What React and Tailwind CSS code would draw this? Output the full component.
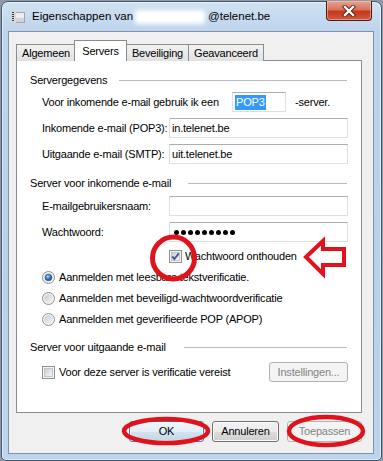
import React from "react";

function Checkbox({ checked }) {
  return (
    <svg width="13" height="13" viewBox="0 0 13 13" className="shrink-0">
      <defs>
        <linearGradient id="cbg" x1="0" y1="0" x2="1" y2="1">
          <stop offset="0" stopColor="#c9cdd3" />
          <stop offset="1" stopColor="#f7f7f7" />
        </linearGradient>
      </defs>
      <rect x="0.5" y="0.5" width="12" height="12" fill="#f5f5f5" stroke="#8e8f8f" />
      <rect x="2.5" y="2.5" width="8" height="8" fill="url(#cbg)" stroke="#b7bcc4" strokeWidth="0.8" />
      {checked && (
        <path d="M3.2 6.3 L5.4 9 L9.8 3.4" fill="none" stroke="#46598e" strokeWidth="1.9" />
      )}
    </svg>
  );
}

function Radio({ checked }) {
  return (
    <svg width="13" height="13" viewBox="0 0 13 13" className="shrink-0">
      <defs>
        <linearGradient id="rbg" x1="0" y1="0" x2="1" y2="1">
          <stop offset="0" stopColor="#c6cad0" />
          <stop offset="1" stopColor="#f4f4f4" />
        </linearGradient>
        <radialGradient id="rsel" cx="0.4" cy="0.35" r="0.7">
          <stop offset="0" stopColor="#b7e3f8" />
          <stop offset="0.45" stopColor="#3f86c4" />
          <stop offset="1" stopColor="#163e72" />
        </radialGradient>
      </defs>
      <circle cx="6.5" cy="6.5" r="6" fill="#f3f3f3" stroke="#8e8f8f" />
      <circle cx="6.5" cy="6.5" r="4.3" fill="url(#rbg)" />
      {checked && <circle cx="6.5" cy="6.5" r="3.3" fill="url(#rsel)" stroke="#24497c" strokeWidth="0.6" />}
    </svg>
  );
}

function Input({ w = "w-[179px]", children }) {
  return (
    <div
      className={`${w} h-[20px] bg-white border border-[#dbdfe6] border-t-[#abadb3] flex items-center pl-[2px] shrink-0`}
    >
      {children}
    </div>
  );
}

function GroupHeader({ label, gap }) {
  return (
    <div className="h-[15px] flex items-center pl-[13px] pr-[14px]">
      <span className="whitespace-nowrap">{label}</span>
      <div className={`flex-1 h-px bg-[#b6bbc1] ${gap}`} />
    </div>
  );
}

const btnNormal =
  "border border-[#707070] rounded-[3px] bg-[linear-gradient(to_bottom,#f2f2f2_0%,#ebebeb_50%,#dddddd_50%,#cfcfcf_100%)] shadow-[inset_0_0_0_1px_#fbfbfb]";
const btnDefault =
  "border border-[#3c7fb1] rounded-[3px] bg-[linear-gradient(to_bottom,#f1f7fc_0%,#e4eef6_50%,#d3e3f0_50%,#c3d7e8_100%)] shadow-[inset_0_0_0_1px_#f8fbfe]";
const btnDisabled = "border border-[#adb2b5] rounded-[3px] bg-[#f4f4f4] text-[#838383]";

export default function App() {
  return (
    <div className="w-[383px] h-[461px] bg-[#8e9aa8] p-[1px] font-['Liberation_Sans',Arial,sans-serif] text-[11px] tracking-[-0.2px] text-black relative overflow-hidden">
      <div className="h-[460px] rounded-t-[7px] rounded-b-[5px] border border-[#44566d] bg-[linear-gradient(to_bottom,#d0e1f2_0%,#bed4ec_30px,#b9d0e9_60%,#bdd4ec_100%)] shadow-[inset_0_0_0_1px_rgba(255,255,255,0.55)] flex flex-col pl-[6px] pr-[7px] pb-[6px]">
        {/* Title bar */}
        <div className="h-[29px] flex items-center relative">
          <svg width="16" height="16" viewBox="0 0 16 16" className="ml-[2px] shrink-0">
            <rect x="4.5" y="3.5" width="10" height="10" fill="#eeeeee" stroke="#a5a5a5" />
            <rect x="5" y="9" width="9" height="4" fill="#d4d4d4" />
            <rect x="2" y="2" width="4" height="12" fill="#d8d8d8" />
            <rect x="2" y="3" width="2" height="1" fill="#3a3a3a" />
            <rect x="2" y="5" width="2" height="1" fill="#3a3a3a" />
            <rect x="2" y="7" width="2" height="1" fill="#3a3a3a" />
            <rect x="2" y="9" width="2" height="1" fill="#3a3a3a" />
            <rect x="2" y="11" width="2" height="1" fill="#3a3a3a" />
          </svg>
          <span className="ml-[6px] text-[11.5px] tracking-normal whitespace-nowrap">Eigenschappen van</span>
          <div className="w-[70px] h-[14px] ml-[2px] bg-white rounded-[3px] blur-[2px]" />
          <span className="ml-[3px] text-[11.5px] tracking-normal whitespace-nowrap">@telenet.be</span>
          <div className="ml-auto mr-[2px] self-start -mt-[1px] w-[46px] h-[20px] rounded-b-[4px] border border-[#4a1c14] border-t-0 bg-[linear-gradient(to_bottom,#e7a190_0%,#d9735d_45%,#c4391d_55%,#d05a3e_100%)] shadow-[inset_0_0_0_1px_rgba(255,210,200,0.5)] flex items-center justify-center">
            <svg width="14" height="12" viewBox="0 0 14 12">
              <path d="M3 2 L11 10 M11 2 L3 10" stroke="#5a1a10" strokeWidth="4.2" strokeLinecap="square" />
              <path d="M3 2 L11 10 M11 2 L3 10" stroke="#ffffff" strokeWidth="2.4" strokeLinecap="square" />
            </svg>
          </div>
        </div>

        {/* Client area */}
        <div className="flex-1 bg-[#f0f0f0] border border-[#8093ab] pt-[8px] pl-[7px] pr-[10px] flex flex-col">
          {/* Tabs */}
          <div className="h-[21px] flex items-end relative z-10 -mb-px">
            <div className="w-[60px] h-[17px] border border-b-0 border-[#898c95] bg-[linear-gradient(to_bottom,#f2f2f2,#e1e1e1)] flex items-center justify-center">
              Algemeen
            </div>
            <div className="w-[53px] h-[21px] -ml-[2px] border border-b-0 border-[#898c95] bg-white flex items-start pt-[2px] justify-center relative z-10">
              Servers
            </div>
            <div className="w-[63px] h-[17px] -ml-[1px] border border-b-0 border-[#898c95] bg-[linear-gradient(to_bottom,#f2f2f2,#e1e1e1)] flex items-center justify-center">
              Beveiliging
            </div>
            <div className="w-[76px] h-[17px] -ml-[1px] border border-b-0 border-[#898c95] bg-[linear-gradient(to_bottom,#f2f2f2,#e1e1e1)] flex items-center justify-center">
              Geavanceerd
            </div>
          </div>

          {/* Panel */}
          <div className="w-[346px] h-[353px] bg-white border border-[#898c95] pt-[12px] flex flex-col">
            <GroupHeader label="Servergegevens" gap="ml-[12px]" />

            <div className="mt-[4px] h-[20px] flex items-center pl-[25px]">
              <span className="w-[190px] whitespace-nowrap">Voor inkomende e-mail gebruik ik een</span>
              <Input w="w-[54px]">
                <span className="bg-[#3399ff] text-white px-[1px] leading-[15px]">POP3</span>
              </Input>
              <span className="ml-[9px]">-server.</span>
            </div>

            <div className="mt-[6px] h-[20px] flex items-center pl-[25px]">
              <span className="w-[127px] whitespace-nowrap">Inkomende e-mail (POP3):</span>
              <Input>in.telenet.be</Input>
            </div>

            <div className="mt-[6px] h-[20px] flex items-center pl-[25px]">
              <span className="w-[127px] whitespace-nowrap">Uitgaande e-mail (SMTP):</span>
              <Input>uit.telenet.be</Input>
            </div>

            <div className="mt-[12px]">
              <GroupHeader label="Server voor inkomende e-mail" gap="ml-[17px]" />
            </div>

            <div className="mt-[5px] h-[20px] flex items-center pl-[25px]">
              <span className="w-[127px] whitespace-nowrap">E-mailgebruikersnaam:</span>
              <Input />
            </div>

            <div className="mt-[6px] h-[20px] flex items-center pl-[25px]">
              <span className="w-[127px] whitespace-nowrap">Wachtwoord:</span>
              <Input>
                <div className="flex items-center gap-[2px] pl-[2px]">
                  {[0, 1, 2, 3, 4, 5, 6, 7, 8].map((i) => (
                    <span key={i} className="w-[5px] h-[5px] rounded-full bg-black" />
                  ))}
                </div>
              </Input>
            </div>

            <div className="mt-[7px] h-[15px] flex items-center pl-[152px] gap-[3px]">
              <Checkbox checked />
              <span>Wachtwoord onthouden</span>
            </div>

            <div className="mt-[6px] h-[15px] flex items-center pl-[25px] gap-[4px]">
              <Radio checked />
              <span>Aanmelden met leesbare tekstverificatie.</span>
            </div>
            <div className="mt-[6px] h-[15px] flex items-center pl-[25px] gap-[4px]">
              <Radio />
              <span>Aanmelden met beveiligd-wachtwoordverificatie</span>
            </div>
            <div className="mt-[6px] h-[15px] flex items-center pl-[25px] gap-[4px]">
              <Radio />
              <span>Aanmelden met geverifieerde POP (APOP)</span>
            </div>

            <div className="mt-[13px]">
              <GroupHeader label="Server voor uitgaande e-mail" gap="ml-[18px]" />
            </div>

            <div className="mt-[7px] h-[20px] flex items-center pl-[25px] pr-[13px] gap-[4px]">
              <Checkbox />
              <span>Voor deze server is verificatie vereist</span>
              <div className={`ml-auto w-[79px] h-[20px] flex items-center justify-center ${btnDisabled}`}>
                Instellingen...
              </div>
            </div>
          </div>

          {/* Buttons */}
          <div className="mt-[8px] w-[346px] flex justify-end gap-[8px]">
            <div className={`w-[75px] h-[21px] flex items-center justify-center ${btnDefault}`}>OK</div>
            <div className={`w-[67px] h-[21px] flex items-center justify-center ${btnNormal}`}>Annuleren</div>
            <div className={`w-[75px] h-[21px] flex items-center justify-center ${btnDisabled}`}>Toepassen</div>
          </div>
        </div>
      </div>

      {/* Red annotations overlay */}
      <svg
        className="absolute left-0 top-0 pointer-events-none"
        width="383"
        height="461"
        viewBox="0 0 383 461"
      >
        <circle cx="173.5" cy="258" r="21" fill="none" stroke="#e0121c" strokeWidth="5" />
        <polygon
          points="306,257 323,241 323,249 344,249 344,265 323,265 323,274"
          fill="#ffffff"
          stroke="#e0121c"
          strokeWidth="4"
          strokeLinejoin="miter"
        />
        <ellipse cx="166" cy="431" rx="42" ry="12" fill="none" stroke="#e0121c" strokeWidth="4.5" />
        <ellipse cx="326" cy="431" rx="37" ry="14" fill="none" stroke="#e0121c" strokeWidth="4.5" />
      </svg>
    </div>
  );
}
